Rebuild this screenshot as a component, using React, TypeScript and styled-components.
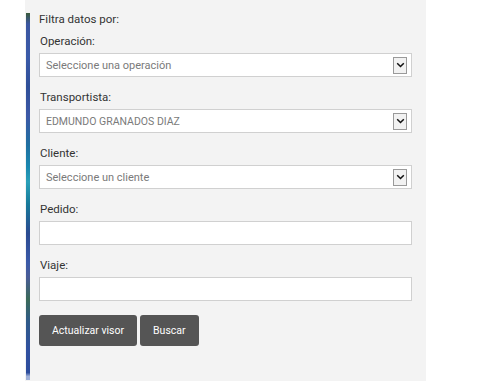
import React from "react";
import styled, { createGlobalStyle } from "styled-components";

const Global = createGlobalStyle`
  html, body { margin: 0; padding: 0; background: #ffffff; }
  body { font-family: Roboto, "Noto Sans", "Liberation Sans", sans-serif; }
  * { box-sizing: border-box; }
`;

const Panel = styled.div`
  margin-left: 25px;
  width: 401px;
  height: 381px;
  background: #f3f3f3;
  display: flex;
`;

const Strip = styled.div`
  width: 4px;
  margin: 13px 0 1px 1px;
  background: linear-gradient(
    180deg,
    #3a5a3a 0%,
    #3b56a0 3%,
    #3a5aa8 12%,
    #2f4f98 20%,
    #3c58a6 28%,
    #1f6fa0 36%,
    #1a88b0 42%,
    #2aa0b8 46%,
    #177a9a 52%,
    #2a4a90 60%,
    #3b5aa8 68%,
    #4a5c96 72%,
    #3a6a58 78%,
    #2f5a88 84%,
    #3050a0 92%,
    #2d4d9c 98%,
    #9fb0d8 99%,
    #9fb0d8 100%
  );
`;

const Form = styled.div`
  display: flex;
  flex-direction: column;
  padding: 11px 0 0 9px;
  width: 382px;
`;

const Title = styled.div`
  font-size: 11.5px;
  line-height: 16px;
  color: #333;
  margin-bottom: 6px;
`;

const Field = styled.div`
  display: flex;
  flex-direction: column;
  margin-bottom: 12px;
`;

const Label = styled.div`
  font-size: 11.5px;
  line-height: 16px;
  color: #333;
  padding-left: 1px;
  margin-bottom: 4px;
`;

const Box = styled.div`
  width: 373px;
  height: 24px;
  background: #fff;
  border: 1px solid #d0d0d0;
  display: flex;
  align-items: center;
  justify-content: space-between;
  padding: 0 4px 0 6px;
`;

const BoxText = styled.span<{ $upper?: boolean }>`
  font-size: ${(p) => (p.$upper ? "10.5px" : "11px")};
  color: #7a7a7a;
`;

const ArrowBox = styled.div`
  width: 14px;
  height: 17px;
  border: 1px solid #9a9a9a;
  background: #f2f2f2;
  display: flex;
  align-items: center;
  justify-content: center;
`;

const Buttons = styled.div`
  display: flex;
  gap: 3px;
  margin-top: 2px;
`;

const Button = styled.button`
  height: 31px;
  margin: 0;
  padding: 0 13px;
  border: none;
  border-radius: 3px;
  background: #555555;
  color: #fff;
  font-family: Roboto, "Noto Sans", "Liberation Sans", sans-serif;
  font-size: 10.5px;
`;

const Chevron = () => (
  <svg width="9" height="6" viewBox="0 0 9 6">
    <path d="M1.2 1.2 L4.5 4.5 L7.8 1.2" fill="none" stroke="#111" strokeWidth="1.5" />
  </svg>
);

const SelectField = ({ label, value, upper }: { label: string; value: string; upper?: boolean }) => (
  <Field>
    <Label>{label}</Label>
    <Box>
      <BoxText $upper={upper}>{value}</BoxText>
      <ArrowBox>
        <Chevron />
      </ArrowBox>
    </Box>
  </Field>
);

const InputField = ({ label }: { label: string }) => (
  <Field>
    <Label>{label}</Label>
    <Box />
  </Field>
);

export default function App() {
  return (
    <>
      <Global />
      <Panel>
        <Strip />
        <Form>
          <Title>Filtra datos por:</Title>
          <SelectField label="Operación:" value="Seleccione una operación" />
          <SelectField label="Transportista:" value="EDMUNDO GRANADOS DIAZ" upper />
          <SelectField label="Cliente:" value="Seleccione un cliente" />
          <InputField label="Pedido:" />
          <InputField label="Viaje:" />
          <Buttons>
            <Button>Actualizar visor</Button>
            <Button>Buscar</Button>
          </Buttons>
        </Form>
      </Panel>
    </>
  );
}
